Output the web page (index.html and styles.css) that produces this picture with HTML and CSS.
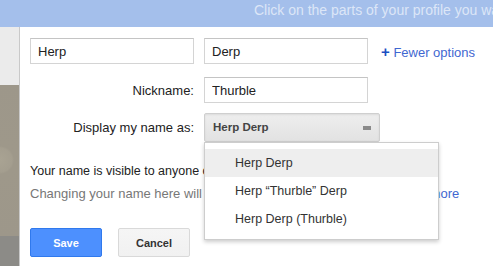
FILE: index.html
```html
<!DOCTYPE html>
<html lang="en">
<head>
  <meta charset="UTF-8" />
  <title>Edit name</title>
  <link rel="stylesheet" href="styles.css">
</head>
<body>
  <div class="topbar">Click on the parts of your profile you want to edit</div>

  <div class="main">
    <div class="side">
      <div class="side-top"></div>
      <div class="side-photo"></div>
      <div class="side-bottom"></div>
    </div>

    <div class="panel">
      <div class="row">
        <input class="field" value="Herp" />
        <input class="field" value="Derp" />
        <a class="toggle" href="#"><span class="plus">+</span> Fewer options</a>
      </div>

      <div class="row nick-row">
        <label class="label">Nickname:</label>
        <input class="field" value="Thurble" />
      </div>

      <div class="row display-row">
        <label class="label">Display my name as:</label>
        <div class="select-wrap">
          <div class="select">Herp Derp<span class="handle"></span></div>
          <ul class="menu">
            <li class="active">Herp Derp</li>
            <li>Herp “Thurble” Derp</li>
            <li>Herp Derp (Thurble)</li>
          </ul>
        </div>
      </div>

      <p class="visible">Your name is visible to anyone on the web.</p>
      <p class="note">Changing your name here will change it in all Google services. <a href="#">Learn more</a></p>

      <div class="actions">
        <button class="btn save">Save</button>
        <button class="btn cancel">Cancel</button>
      </div>
    </div>
  </div>
</body>
</html>
```

FILE: styles.css
```css
body {
  margin: 0;
  width: 493px;
  height: 266px;
  overflow: hidden;
  font-family: "Liberation Sans", Arial, sans-serif;
  font-size: 13px;
  color: #222;
  background: #fff;
}
.topbar {
  height: 27px;
  line-height: 20px;
  padding-left: 254px;
  background: #a4bfeb;
  color: #dce6f7;
  font-size: 14px;
  white-space: nowrap;
  overflow: hidden;
  box-sizing: border-box;
}
.main {
  display: flex;
  height: 239px;
}
.side {
  width: 19px;
  display: flex;
  flex-direction: column;
  border-right: 1px solid #c9c9c9;
}
.side-top {
  height: 58px;
  background: #ebebeb;
}
.side-photo {
  height: 151px;
  background: radial-gradient(circle at 0 75px, #a9a393 0, #a49e8f 12px, #9e988a 14px, #9d978a 100%);
}
.side-bottom {
  flex: 1;
  background: #8c8b87;
}
.panel {
  flex: 1;
  padding: 11px 0 0 10px;
  position: relative;
}
.row {
  display: flex;
  align-items: center;
  gap: 10px;
}
.nick-row {
  margin-top: 13px;
}
.display-row {
  margin-top: 10px;
}
.field {
  box-sizing: border-box;
  width: 164px;
  height: 26px;
  margin: 0;
  padding: 0 7px;
  border: 1px solid #d4d4d4;
  border-top-color: #c4c4c4;
  font-family: "Liberation Sans", Arial, sans-serif;
  font-size: 13px;
  color: #222;
  outline: none;
}
.toggle {
  margin-left: 3px;
  color: #3f67d1;
  text-decoration: none;
  font-size: 13px;
}
.plus {
  color: #1b4ec2;
  font-weight: bold;
  font-size: 15px;
}
.label {
  width: 164px;
  text-align: right;
  font-size: 13px;
  color: #222;
}
.select-wrap {
  position: relative;
}
.select {
  box-sizing: border-box;
  width: 176px;
  height: 29px;
  line-height: 27px;
  padding-left: 8px;
  border: 1px solid #cfcfcf;
  border-radius: 2px;
  background: linear-gradient(#eeeeee, #e2e2e2);
  box-shadow: inset 0 1px 2px rgba(0, 0, 0, 0.08);
  font-size: 11.5px;
  font-weight: bold;
  color: #444;
  position: relative;
}
.handle {
  position: absolute;
  right: 8px;
  top: 12px;
  width: 8px;
  height: 4px;
  background: #8a8a8a;
}
.menu {
  position: absolute;
  top: 29px;
  left: 0;
  z-index: 2;
  box-sizing: border-box;
  width: 235px;
  margin: 0;
  padding: 6px 0;
  list-style: none;
  background: #fff;
  border: 1px solid #cdcdcd;
  box-shadow: 0 2px 4px rgba(0, 0, 0, 0.2);
}
.menu li {
  height: 28px;
  line-height: 28px;
  padding-left: 30px;
  font-size: 12.5px;
  color: #333;
}
.menu li.active {
  background: #eeeeee;
}
.visible {
  margin: 21px 0 0;
  line-height: 16px;
  font-size: 12.5px;
  color: #222;
  white-space: nowrap;
}
.note {
  margin: 7px 0 0;
  line-height: 16px;
  font-size: 13px;
  color: #777;
  white-space: nowrap;
}
.note a {
  color: #3f67d1;
  text-decoration: none;
}
.actions {
  margin-top: 26px;
  display: flex;
  gap: 16px;
}
.btn {
  box-sizing: border-box;
  width: 72px;
  height: 29px;
  border-radius: 2px;
  font-family: "Liberation Sans", Arial, sans-serif;
  font-size: 11px;
  font-weight: bold;
  cursor: pointer;
}
.btn.save {
  background: #4d90fe;
  border: 1px solid #3079ed;
  color: #fff;
}
.btn.cancel {
  background: linear-gradient(#f5f5f5, #f1f1f1);
  border: 1px solid #d9d9d9;
  color: #333;
}
```
